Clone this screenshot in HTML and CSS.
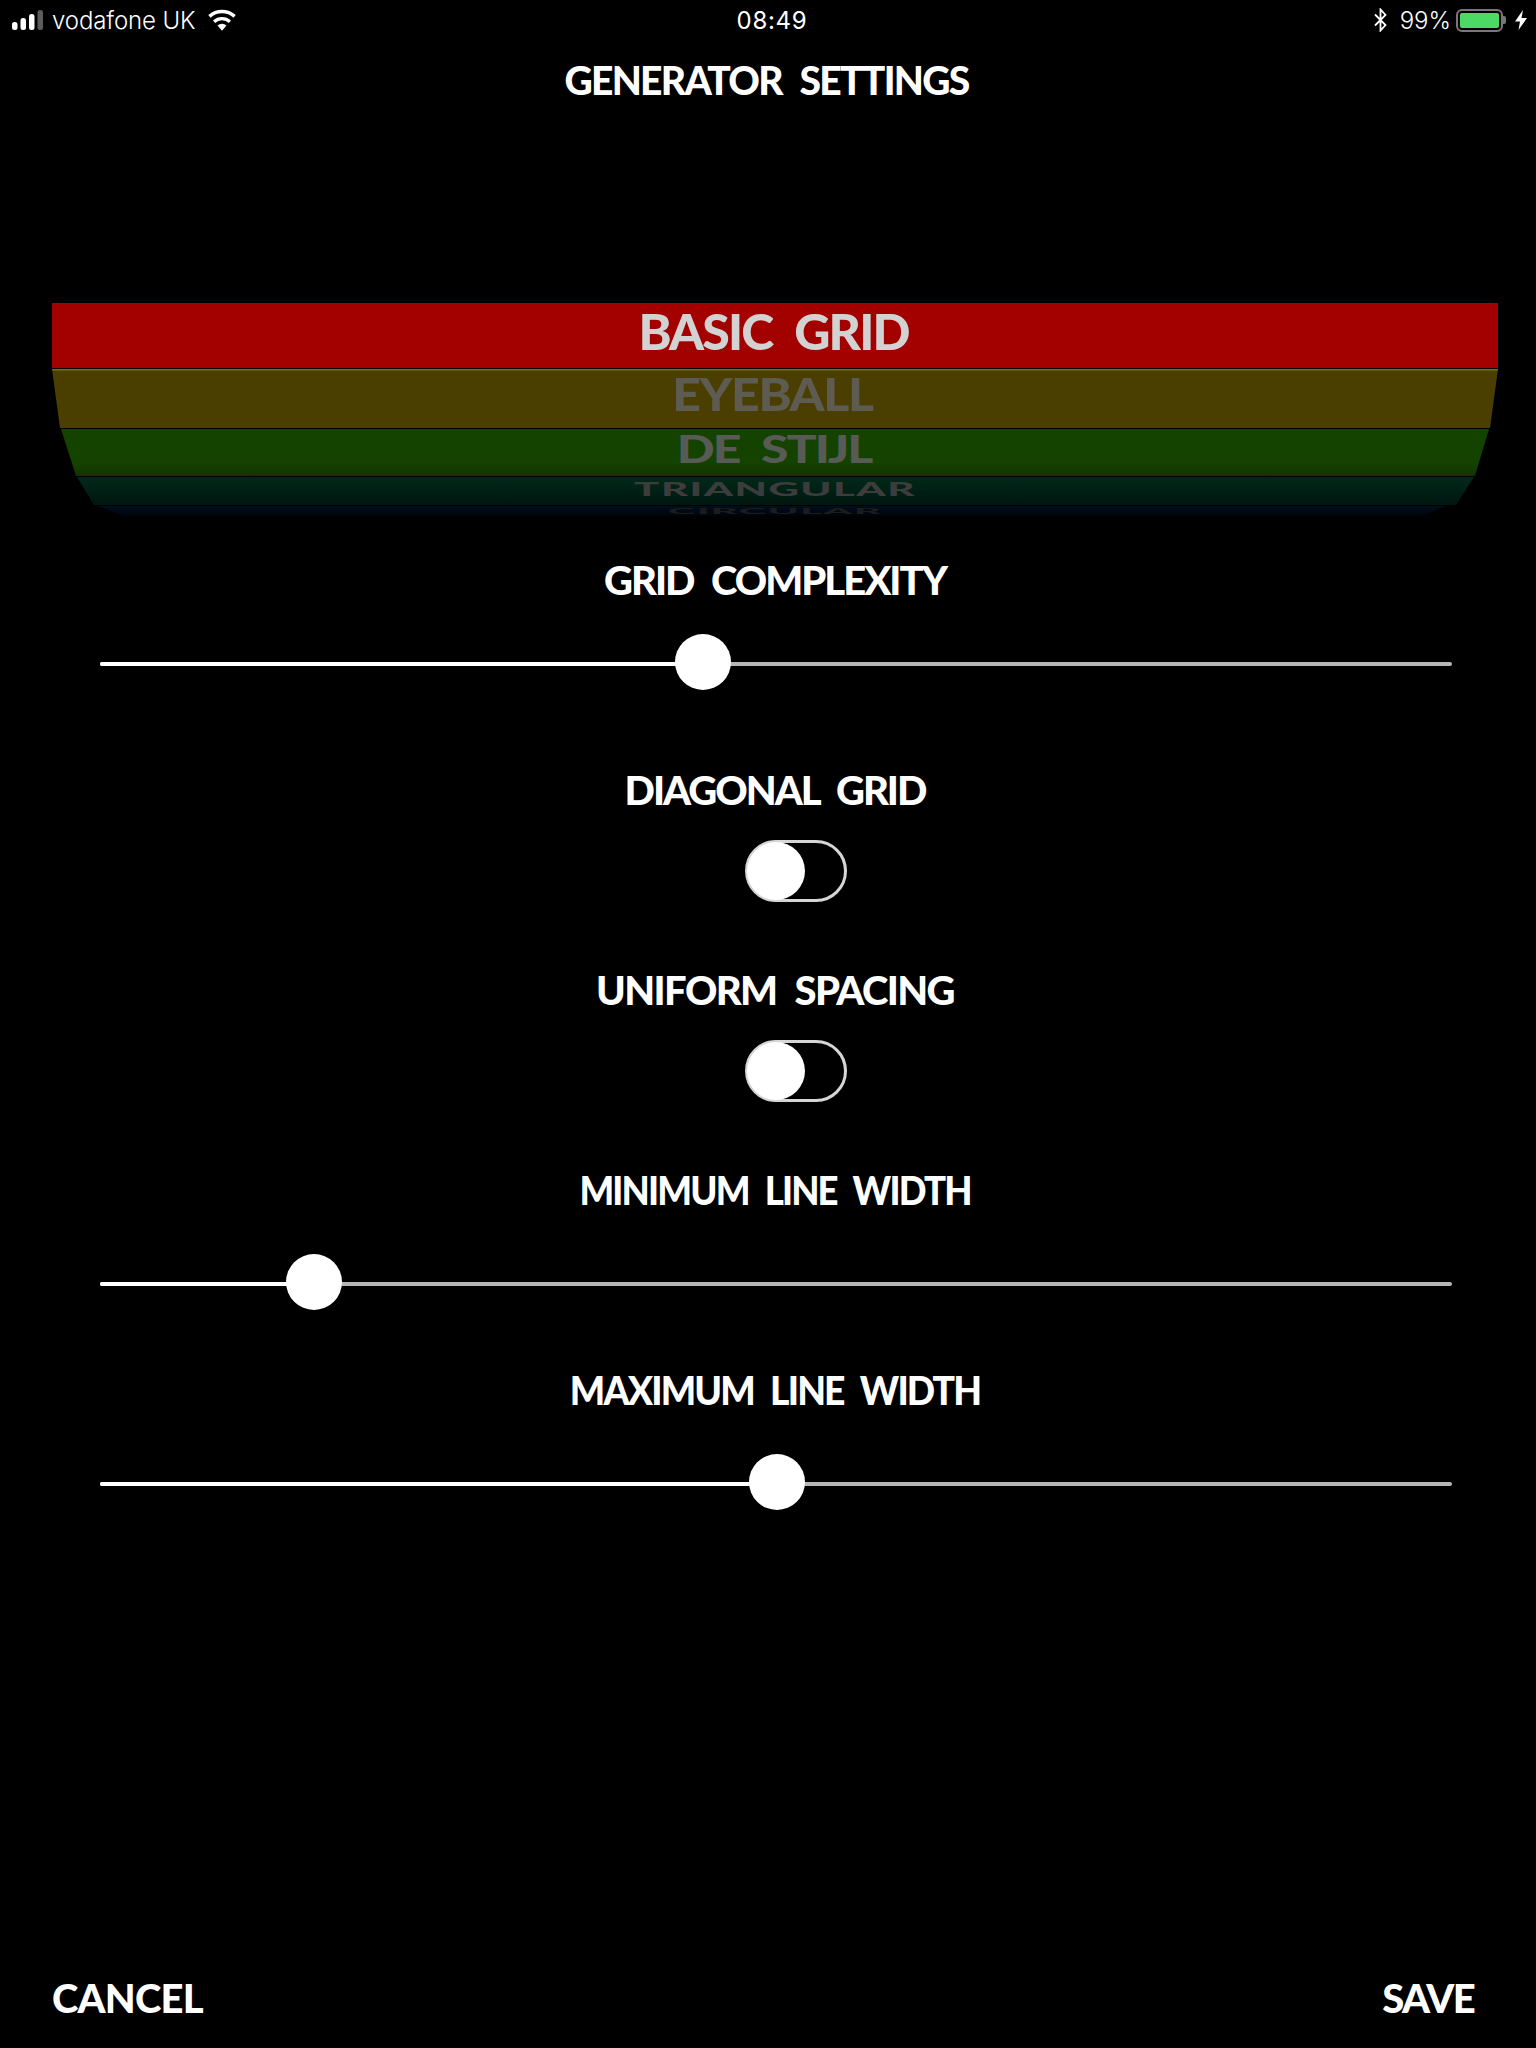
FILE: index.html
```html
<!DOCTYPE html>
<html lang="en">
<head>
<meta charset="utf-8">
<title>Generator Settings</title>
<link rel="stylesheet" href="styles.css">
</head>
<body>
<div class="page">
  <header class="status">
    <div class="status-left">
      <svg class="signal" viewBox="0 0 32 20" width="32" height="20"><rect x="0" y="12" width="5.500" height="8" rx="2.500" fill="#fff"/><rect x="8.500" y="8" width="5.500" height="12" rx="2.500" fill="#fff"/><rect x="17" y="4" width="5.500" height="16" rx="2.500" fill="#fff"/><rect x="25.500" y="0" width="5.500" height="20" rx="2.500" fill="#5c5c5c"/></svg>
      <span class="carrier">vodafone UK</span>
      <svg class="wifi" viewBox="0 0 28 20" width="30" height="22"><path d="M14 20 9.800 15.200a6.200 6.200 0 0 1 8.400 0Z" fill="#fff"/><path d="M7.600 12.700a9.600 9.600 0 0 1 12.800 0l2-2.300a12.800 12.800 0 0 0-16.800 0Z" fill="#fff"/><path d="M3.300 7.800a16 16 0 0 1 21.400 0l2.100-2.400a19.300 19.300 0 0 0-25.600 0Z" fill="#fff"/></svg>
    </div>
    <div class="clock">08:49</div>
    <div class="status-right">
      <svg class="bt" viewBox="0 0 15 24" width="15" height="24"><path d="M2 6.500 12.500 17 7.500 22.500V1.500L12.500 7 2 17.500" fill="none" stroke="#fff" stroke-width="1.800"/></svg>
      <span class="percent">99%</span>
      <div class="battery"><div class="battery-fill"></div></div>
      <div class="battery-tip"></div>
      <svg class="bolt" viewBox="0 0 12 20" width="12" height="20"><path d="M8 0 0 11.500H5L3.500 20 12 8H6.500Z" fill="#fff"/></svg>
    </div>
  </header>

  <h1 class="title">GENERATOR SETTINGS</h1>

  <main class="content">
    <div class="picker">
      <div class="row row-red"><span class="row-text">BASIC GRID</span></div>
      <div class="row row-yellow"><span class="row-text">EYEBALL</span></div>
      <div class="row row-green"><span class="row-text">DE STIJL</span></div>
      <div class="row row-teal"><span class="row-text">TRIANGULAR</span></div>
      <div class="row row-navy"><span class="row-text">CIRCULAR</span></div>
    </div>

    <div class="label label-complexity">GRID COMPLEXITY</div>
    <div class="slider slider-complexity" style="--pos:44.6%"><div class="track"><div class="fill"></div></div><div class="thumb"></div></div>

    <div class="label label-diagonal">DIAGONAL GRID</div>
    <div class="toggle toggle-diagonal"><div class="knob"></div></div>

    <div class="label label-uniform">UNIFORM SPACING</div>
    <div class="toggle toggle-uniform"><div class="knob"></div></div>

    <div class="label label-min">MINIMUM LINE WIDTH</div>
    <div class="slider slider-min" style="--pos:15.8%"><div class="track"><div class="fill"></div></div><div class="thumb"></div></div>

    <div class="label label-max">MAXIMUM LINE WIDTH</div>
    <div class="slider slider-max" style="--pos:50.1%"><div class="track"><div class="fill"></div></div><div class="thumb"></div></div>
  </main>

  <footer class="footer">
    <span class="action action-cancel">CANCEL</span>
    <span class="action action-save">SAVE</span>
  </footer>
</div>
</body>
</html>
```
FILE: styles.css
```css
* { box-sizing: border-box; }
html, body { margin: 0; padding: 0; background: #000; }
body { font-family: "Lato", "Liberation Sans", sans-serif; color: #fff; }
.page { width: 1536px; height: 2048px; display: flex; flex-direction: column; overflow: hidden; background: #000; }

/* status bar */
.status { height: 40px; flex: none; display: grid; grid-template-columns: 1fr auto 1fr; align-items: center; padding: 0 9px 0 12px; font-family: "Inter", "Liberation Sans", sans-serif; font-size: 24px; font-weight: 300; }
.status-left, .status-right { display: flex; align-items: center; }
.status-right { justify-content: flex-end; }
.signal { margin-right: 8px; }
.carrier { letter-spacing: -0.1px; }
.wifi { margin-left: 11px; }
.clock { font-weight: 400; letter-spacing: 0.7px; margin-left: 5px; }
.bt { margin-right: 12px; }
.percent { margin-right: 5px; }
.battery { width: 47px; height: 23px; border: 2px solid #777; border-radius: 6px; padding: 2px; }
.battery-fill { width: 100%; height: 100%; background: #4cd964; border-radius: 2px; }
.battery-tip { width: 3px; height: 8px; background: #777; border-radius: 0 2px 2px 0; margin-right: 9px; }

/* headings and labels */
.title, .label, .action, .row-text { font-family: "Lato", "Liberation Sans", sans-serif; font-weight: 900; white-space: nowrap; }
.title { margin: 20px 0 0; padding-right: 3px; height: 40px; line-height: 40px; text-align: center; font-size: 39px; letter-spacing: -1.7px; word-spacing: 10px; }
.content { flex: none; display: flex; flex-direction: column; padding: 0 38px 0 52px; }
.label { height: 40px; line-height: 40px; text-align: center; font-size: 40px; letter-spacing: -2px; word-spacing: 10px; }
.label-complexity { margin-top: 44px; }
.label-diagonal { margin-top: 80px; }
.label-uniform { margin-top: 68px; letter-spacing: -1.6px; }
.label-min { margin-top: 68px; transform: scaleX(0.914); }
.label-max { margin-top: 60px; transform: scaleX(0.932); }

/* wheel picker */
.picker { margin-top: 203px; height: 213px; display: flex; flex-direction: column; gap: 1px; }
.row { flex: none; display: flex; align-items: center; justify-content: center; }
.row-text { display: block; font-size: 50px; line-height: 50px; letter-spacing: -1.4px; word-spacing: 12px; }
.row-red { height: 65px; padding-bottom: 10px; background: #a30000; color: #d2d2d2; }
.row-red .row-text { letter-spacing: -1.9px; margin-left: -3px; }
.row-yellow { height: 59px; padding: 0 5px 12px 0; background: linear-gradient(#7a6a12 0, #7a6a12 1px, #4a3e00 2px); color: #5e5c52; clip-path: polygon(0 0, 100% 0, calc(100% - 8px) 100%, 8px 100%); }
.row-yellow .row-text { transform: scaleY(0.93); }
.row-green { height: 47px; padding: 0 2px 7px 0; background: linear-gradient(#144300 70%, #123400); color: #585a55; clip-path: polygon(9px 0, calc(100% - 9px) 0, calc(100% - 23px) 100%, 24px 100%); }
.row-green .row-text { transform: scaleY(0.74); letter-spacing: -2.1px; }
.row-teal { height: 28px; overflow: hidden; background: linear-gradient(#00291a, #00170f); color: #3c3c3c; clip-path: polygon(25px 0, calc(100% - 24px) 0, calc(100% - 42px) 100%, 42px 100%); align-items: flex-start; }
.row-teal .row-text { transform: scaleY(0.46); transform-origin: top; letter-spacing: 1.4px; font-size: 42px; }
.row-navy { height: 10px; overflow: hidden; background: linear-gradient(#000f1e, #00040a); color: #1c1c1c; clip-path: polygon(46px 0, calc(100% - 52px) 0, calc(100% - 76px) 100%, 72px 100%); align-items: flex-start; }
.row-navy .row-text { transform: scaleY(0.17); transform-origin: top; margin-top: 1px; letter-spacing: 1.2px; font-size: 42px; }

/* sliders */
.slider { position: relative; height: 56px; margin: 0 46px 0 48px; display: flex; align-items: center; }
.slider-complexity { margin-top: 34px; }
.slider-min { margin-top: 44px; }
.slider-max { margin-top: 44px; }
.track { width: 100%; height: 4px; margin-top: 4px; background: #b6b6b6; border-radius: 2px; overflow: hidden; }
.fill { width: var(--pos); height: 100%; background: #fff; }
.thumb { position: absolute; left: var(--pos); top: 0; width: 56px; height: 56px; margin-left: -28px; border-radius: 50%; background: #fff; }

/* toggles */
.toggle { width: 102px; height: 62px; margin-left: 693px; border: 3px solid #d6d6d6; border-radius: 31px; display: flex; align-items: center; }
.toggle-diagonal { margin-top: 30px; }
.toggle-uniform { margin-top: 30px; }
.knob { width: 58px; height: 58px; border-radius: 50%; background: #fff; margin-left: -1px; flex: none; }

/* footer */
.footer { margin-top: auto; padding: 0 62px 30px 52px; display: flex; justify-content: space-between; }
.action { height: 40px; line-height: 40px; font-size: 40px; }
.action-cancel { letter-spacing: -0.8px; }
.action-save { letter-spacing: -1.6px; }
```
